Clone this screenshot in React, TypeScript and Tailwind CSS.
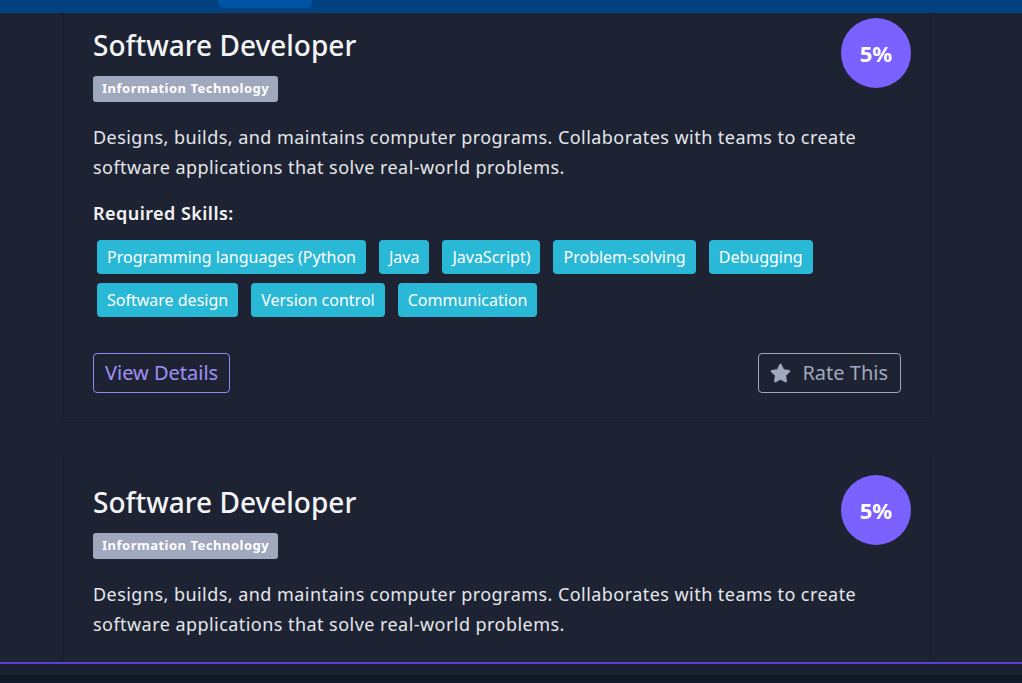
import React from "react";
import { FaStar } from "react-icons/fa";

const skills = [
  "Programming languages (Python",
  "Java",
  "JavaScript)",
  "Problem-solving",
  "Debugging",
  "Software design",
  "Version control",
  "Communication",
];

function Card({ first }: { first?: boolean }) {
  return (
    <div
      className={`relative w-[868px] shrink-0 border border-[#1a1e2c] bg-[#1e2333] px-[29px] pt-[31px] pb-[29px] ${
        first ? "-mt-[4px]" : ""
      }`}
    >
      <div className="absolute right-[19px] top-[21px] flex h-[70px] w-[70px] items-center justify-center rounded-full bg-[#7b61ff] text-[22px] font-bold text-white">
        5%
      </div>
      <h2 className="text-[28px] leading-[34px] font-medium text-[#f3f4f6]">Software Developer</h2>
      <div className="mt-[14px] inline-flex h-[26px] items-center rounded-[3px] bg-[#a0a8bd] px-[9px] text-[13px] font-bold tracking-[0.5px] text-white">
        Information Technology
      </div>
      <p className="mt-[20px] text-[18px] leading-[30px] tracking-[0.45px] text-[#e5e7eb]">
        Designs, builds, and maintains computer programs. Collaborates with teams to create
        <br />
        software applications that solve real-world problems.
      </p>
      <h3 className="mt-[18px] text-[18px] leading-[27px] font-semibold tracking-[0.45px] text-[#f3f4f6]">
        Required Skills:
      </h3>
      <div className="mt-[13px] flex flex-wrap gap-x-[13px] gap-y-[9px] pl-[4px] pr-[60px]">
        {skills.map((s) => (
          <span
            key={s}
            className="rounded-[4px] bg-[#29b8d6] px-[10px] py-[5px] text-[16px] leading-[24px] text-white"
          >
            {s}
          </span>
        ))}
      </div>
      <div className="mt-[36px] flex items-center justify-between">
        <button className="h-[40px] rounded-[4px] border border-[#9785f2] px-[11px] text-[20px] text-[#a090f5]">
          View Details
        </button>
        <button className="flex h-[40px] items-center gap-[11px] rounded-[4px] border border-[#a0a8bd] px-[12px] pl-[11px] text-[20px] text-[#a0a8bd]">
          <FaStar className="h-[20px] w-[21px]" />
          Rate This
        </button>
      </div>
    </div>
  );
}

export default function App() {
  return (
    <div className="relative h-[683px] overflow-hidden bg-[#1e2333] font-['Noto_Sans',sans-serif]">
      <div className="fixed inset-x-0 top-0 z-10 h-[13px] bg-[#00417f]">
        <div className="ml-[218px] h-[8px] w-[94px] rounded-b-[5px] bg-[#0052a3]" />
      </div>
      <div className="flex flex-col gap-[30px] pl-[63px]">
        <Card first />
        <Card />
      </div>
      <div className="fixed inset-x-0 bottom-0 z-10 h-[21px] border-t-2 border-[#5a3fd0] bg-[#111827]">
        <div className="h-[11px] bg-[#1c2131]" />
      </div>
    </div>
  );
}
